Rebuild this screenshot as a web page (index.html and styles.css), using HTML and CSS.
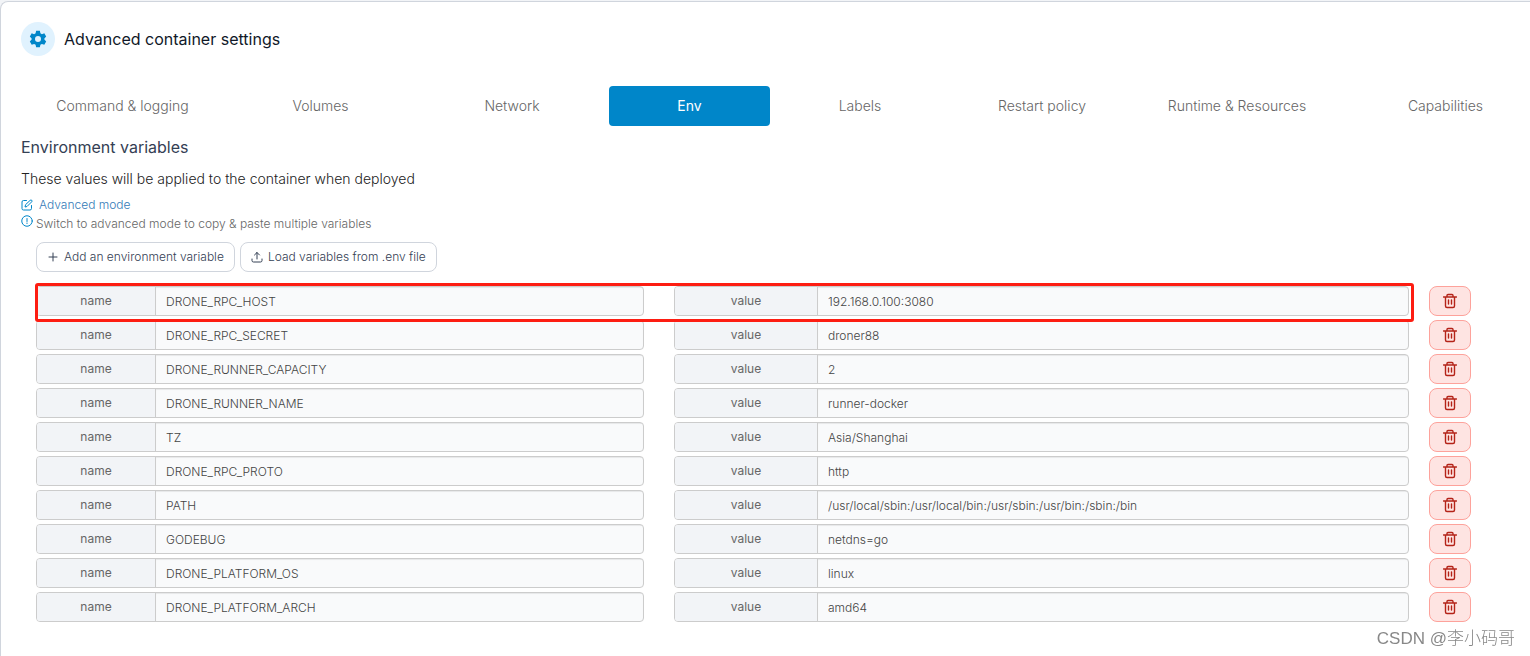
FILE: index.html
```
<!DOCTYPE html>
<html lang="en">
<head>
<meta charset="utf-8">
<title>Advanced container settings</title>
<link rel="stylesheet" href="styles.css">
</head>
<body>
<svg class="sprite" aria-hidden="true">
  <symbol id="trash" viewBox="0 0 14 16"><path d="M.5 4h13M4 4V2.500a1 1 0 0 1 1-1h4a1 1 0 0 1 1 1V4M2.500 4v9a1.500 1.500 0 0 0 1.500 1.500h6a1.500 1.500 0 0 0 1.500-1.500V4M5.500 7v4M8.500 7v4"/></symbol>
</svg>
<main class="card">
  <header class="card-head">
    <span class="badge">
      <svg class="gear" viewBox="0 0 24 24"><path fill-rule="evenodd" d="M9.500 1h5l.7 3.300 2 1.200 3.200-1.100 2.500 4.400-2.400 2.400v1.600l2.400 2.400-2.500 4.400-3.200-1.100-2 1.200-.7 3.300h-5l-.7-3.300-2-1.200-3.200 1.100-2.500-4.400 2.400-2.400v-1.600L1.100 8.800l2.500-4.400 3.200 1.100 2-1.200zM12 8a4 4 0 1 0 0 8 4 4 0 0 0 0-8z"/></svg>
    </span>
    <h1>Advanced container settings</h1>
  </header>
  <nav class="tabs">
    <a href="#command">Command &amp; logging</a>
    <a href="#volumes">Volumes</a>
    <a href="#network">Network</a>
    <a href="#env" class="active" aria-current="page">Env</a>
    <a href="#labels">Labels</a>
    <a href="#restart">Restart policy</a>
    <a href="#runtime">Runtime &amp; Resources</a>
    <a href="#capabilities">Capabilities</a>
  </nav>
  <section class="env">
    <h2>Environment variables</h2>
    <p class="lead">These values will be applied to the container when deployed</p>
    <a class="mode" href="#advanced">
      <svg class="icon" viewBox="0 0 24 24"><path d="M11 3H5a3 3 0 0 0-3 3v13a3 3 0 0 0 3 3h13a3 3 0 0 0 3-3v-6M18.500 2.500a2.100 2.100 0 0 1 3 3L12 15l-4 1 1-4z"/></svg>
      Advanced mode
    </a>
    <p class="hint">
      <svg class="icon" viewBox="0 0 24 24"><circle cx="12" cy="12" r="10.500"/><path d="M12 7v6M12 16v1"/></svg>
      Switch to advanced mode to copy &amp; paste multiple variables
    </p>
    <div class="actions">
      <button type="button"><svg class="icon" viewBox="0 0 24 24"><path d="M12 4v16M4 12h16"/></svg>Add an environment variable</button>
      <button type="button"><svg class="icon" viewBox="0 0 24 24"><path d="M2 16v3a3 3 0 0 0 3 3h14a3 3 0 0 0 3-3v-3M12 16V3M7 8l5-5 5 5"/></svg>Load variables from .env file</button>
    </div>
    <div class="rows" id="rows"></div>
  </section>
</main>
<div class="watermark">CSDN @李小码哥</div>
<script src="rows.js"></script>
</body>
</html>
```
FILE: rows.js
```
const variables = [
  ["DRONE_RPC_HOST", "192.168.0.100:3080"],
  ["DRONE_RPC_SECRET", "droner88"],
  ["DRONE_RUNNER_CAPACITY", "2"],
  ["DRONE_RUNNER_NAME", "runner-docker"],
  ["TZ", "Asia/Shanghai"],
  ["DRONE_RPC_PROTO", "http"],
  ["PATH", "/usr/local/sbin:/usr/local/bin:/usr/sbin:/usr/bin:/sbin:/bin"],
  ["GODEBUG", "netdns=go"],
  ["DRONE_PLATFORM_OS", "linux"],
  ["DRONE_PLATFORM_ARCH", "amd64"]
];

document.getElementById("rows").innerHTML = variables.map(([name, value], i) => `
  <div class="row">
    <div class="pair${i === 0 ? " marked" : ""}">
      <div class="field name"><label for="name-${i}">name</label><input id="name-${i}" type="text" value="${name}"></div>
      <div class="field value"><label for="value-${i}">value</label><input id="value-${i}" type="text" value="${value}"></div>
    </div>
    <button type="button" class="delete" aria-label="Delete ${name}"><svg class="icon" viewBox="0 0 14 16"><use href="#trash"/></svg></button>
  </div>`).join("");
```
FILE: styles.css
```
* {
  box-sizing: border-box;
}

body {
  margin: 0;
  padding-top: 1px;
  background: #f2f4f7;
  font-family: Inter, "Noto Sans CJK SC", sans-serif;
  font-size: 12px;
  color: #767676;
  overflow: hidden;
}

h1, h2, p {
  margin: 0;
  font-weight: 400;
}

a {
  text-decoration: none;
}

button, input {
  font: inherit;
}

.sprite {
  display: none;
}

.icon {
  width: 12px;
  height: 12px;
  flex: none;
  fill: none;
  stroke: currentColor;
  stroke-width: 2;
  stroke-linecap: round;
  stroke-linejoin: round;
}

.card {
  min-height: 100vh;
  padding: 20px 0 20px 20px;
  background: #fff;
  border: 1px solid #d0d5dd;
  border-right: 0;
  border-top-left-radius: 8px;
}

.card-head {
  display: flex;
  align-items: center;
  gap: 9px;
}

.badge {
  display: grid;
  place-items: center;
  width: 34px;
  height: 34px;
  border-radius: 50%;
  background: #e0f2fe;
}

.gear {
  width: 18px;
  height: 18px;
  fill: #0086c9;
}

h1 {
  font-size: 16px;
  line-height: 24px;
  color: #101828;
}

.tabs {
  display: grid;
  grid-template-columns: 203fr 189fr 190fr 161fr 176fr 184fr 202fr 211fr;
  gap: 2px;
  margin: 30px -21px 0 0;
}

.tabs a {
  border-radius: 4px;
  font-size: 14px;
  font-weight: 300;
  line-height: 40px;
  text-align: center;
  color: #666;
}

.tabs .active {
  background: #0086c9;
  font-weight: 400;
  color: #fff;
}

h2 {
  margin-top: 9px;
  font-size: 16px;
  line-height: 24px;
  color: #344054;
}

.lead {
  margin-top: 10px;
  font-size: 14px;
  font-weight: 300;
  line-height: 20px;
  color: #222;
}

.mode {
  display: flex;
  align-items: center;
  gap: 6px;
  margin-top: 6px;
  font-weight: 300;
  line-height: 20px;
  color: #337ab7;
}

.mode .icon, .hint .icon {
  color: #0086c9;
}

.hint {
  display: flex;
  gap: 3px;
  font-weight: 300;
  line-height: 18px;
  color: #666;
}

.actions {
  display: flex;
  gap: 5px;
  margin: 9px 0 0 15px;
}

.actions button {
  display: flex;
  align-items: center;
  gap: 5px;
  height: 30px;
  padding: 0 10px 1px;
  border: 1px solid #d0d5dd;
  border-radius: 8px;
  background: #fff;
  font-weight: 300;
  color: #344054;
}

.rows {
  display: grid;
  gap: 4px;
  margin: 14px 59px 0 15px;
}

.row {
  display: flex;
  gap: 20px;
}

.pair {
  position: relative;
  flex: 1;
  display: grid;
  grid-template-columns: 608fr 735fr;
  gap: 30px;
}

.marked::after {
  content: "";
  position: absolute;
  z-index: 1;
  inset: -3px -5px -6px -1px;
  border: 3px solid #fd1d12;
  border-radius: 3px;
  pointer-events: none;
}

.field {
  display: flex;
  height: 30px;
  border: 1px solid #ccc;
  border-radius: 4px;
  overflow: hidden;
  background: #f9fafb;
}

.field label {
  flex: none;
  width: 119px;
  border-right: 1px solid #ccc;
  background: #f2f4f7;
  line-height: 28px;
  text-align: center;
  color: #666;
}

.value label {
  width: 143px;
}

.field input {
  flex: 1;
  min-width: 0;
  padding: 0 10px;
  border: 0;
  box-shadow: inset 0 1px 1px rgba(0, 0, 0, .075);
  background: transparent;
  font-weight: 300;
  color: #444;
}

.delete {
  display: grid;
  place-items: center;
  width: 42px;
  height: 30px;
  padding: 0;
  border: 1px solid #fda29b;
  border-radius: 8px;
  background: #fee4e2;
  color: #b42318;
}

.delete .icon {
  width: 14px;
  height: 16px;
  stroke-width: 1.4;
}

.watermark {
  position: fixed;
  right: 15px;
  bottom: 5px;
  font-family: "Liberation Sans", "Noto Sans CJK SC", sans-serif;
  font-size: 17px;
  font-weight: 300;
  line-height: 24px;
  color: #888;
}
```
